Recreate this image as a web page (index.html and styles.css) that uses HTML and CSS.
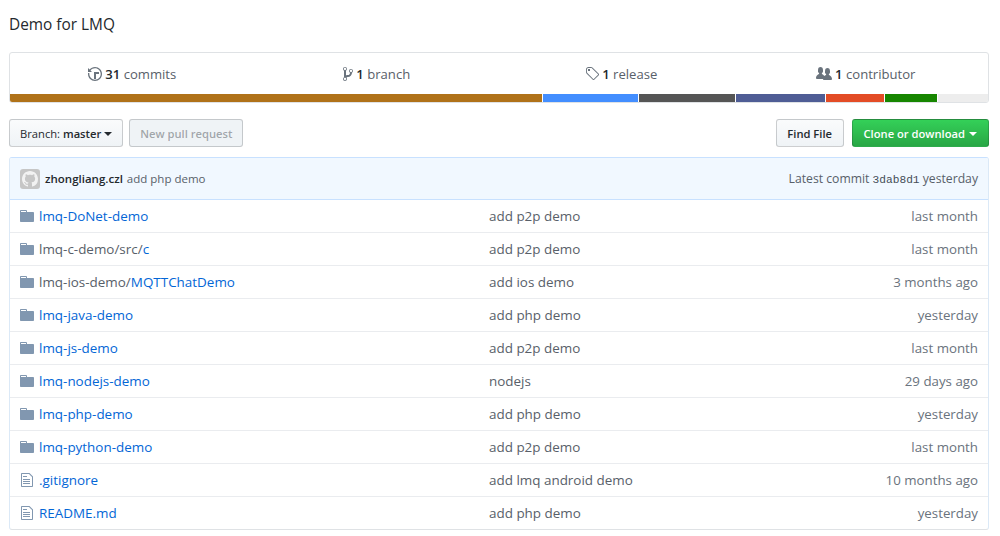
FILE: index.html
```html
<!DOCTYPE html>
<html lang="en">
<head>
<meta charset="utf-8">
<title>Demo for LMQ</title>
<link rel="stylesheet" href="styles.css">
</head>
<body>
<svg class="defs" width="0" height="0" aria-hidden="true">
  <symbol id="i-dir" viewBox="0 0 14 16"><path d="M13 4H7V3c0-.66-.31-1-1-1H1c-.55 0-1 .45-1 1v10c0 .55.45 1 1 1h12c.55 0 1-.45 1-1V5c0-.55-.45-1-1-1zM6 4H1V3h5v1z"/></symbol>
  <symbol id="i-file" viewBox="0 0 12 16"><path d="M6 5H2V4h4v1zM2 8h7V7H2v1zm0 2h7V9H2v1zm0 2h7v-1H2v1zm10-7.5V14c0 .55-.45 1-1 1H1c-.55 0-1-.45-1-1V2c0-.55.45-1 1-1h7.5L12 4.5zM11 5L8 2H1v12h10V5z"/></symbol>
</svg>
<p class="desc">Demo for LMQ</p>

<section class="summary">
  <ul class="stats">
    <li><svg class="stat-icon" width="14" height="16" viewBox="0 0 14 16"><path d="M8 13H6V6h5v2H8v5zM7 1C4.81 1 2.87 2.02 1.59 3.59L0 2v4h4L2.5 4.5C3.55 3.17 5.17 2.3 7 2.3c3.14 0 5.7 2.56 5.7 5.7s-2.56 5.7-5.7 5.7A5.71 5.71 0 0 1 1.3 8c0-.34.03-.67.09-1H.08C.03 7.33 0 7.66 0 8c0 3.86 3.14 7 7 7s7-3.14 7-7-3.14-7-7-7z"/></svg><span><strong>31</strong> commits</span></li>
    <li><svg class="stat-icon" width="10" height="16" viewBox="0 0 10 16"><path d="M10 5c0-1.11-.89-2-2-2a1.993 1.993 0 0 0-1 3.72v.3c-.02.52-.23.98-.63 1.38-.4.4-.86.61-1.38.63-.83.02-1.48.16-2 .45V4.72a1.993 1.993 0 0 0-1-3.72C.88 1 0 1.89 0 3a2 2 0 0 0 1 1.72v6.56c-.59.35-1 .99-1 1.72 0 1.11.89 2 2 2 1.11 0 2-.89 2-2 0-.53-.2-1-.53-1.36.09-.06.48-.41.59-.47.25-.11.56-.17.94-.17 1.05-.05 1.95-.45 2.75-1.25S8.95 7.77 9 6.73h-.02C9.59 6.37 10 5.73 10 5zM2 1.8c.66 0 1.2.55 1.2 1.2 0 .65-.55 1.2-1.2 1.2C1.35 4.2.8 3.65.8 3c0-.65.55-1.2 1.2-1.2zm0 12.41c-.66 0-1.2-.55-1.2-1.2 0-.65.55-1.2 1.2-1.2.65 0 1.2.55 1.2 1.2 0 .65-.55 1.2-1.2 1.2zm6-8c-.66 0-1.2-.55-1.2-1.2 0-.65.55-1.2 1.2-1.2.65 0 1.2.55 1.2 1.2 0 .65-.55 1.2-1.2 1.2z"/></svg><span><strong>1</strong> branch</span></li>
    <li><svg class="stat-icon" width="14" height="16" viewBox="0 0 14 16"><path d="M7.73 1.73C7.26 1.26 6.62 1 5.96 1H3.5C2.13 1 1 2.13 1 3.5v2.47c0 .66.27 1.3.73 1.77l6.06 6.06c.39.39 1.02.39 1.41 0l4.59-4.59a.996.996 0 0 0 0-1.41L7.73 1.73zM2.38 7.09c-.31-.3-.47-.7-.47-1.13V3.5c0-.88.72-1.59 1.59-1.59h2.47c.42 0 .83.16 1.13.47l6.14 6.13-4.73 4.73-6.13-6.15zM3.01 3h2v2H3V3h.01z"/></svg><span><strong>1</strong> release</span></li>
    <li><svg class="stat-icon" width="16" height="16" viewBox="0 0 16 16"><path d="M16 12.999c0 .439-.45 1-1 1H7.995c-.539 0-.994-.447-.995-.999H1c-.55 0-1-.561-1-1 0-2.634 3-4 3-4s.229-.409 0-1c-.841-.621-1.058-.59-1-3 .058-2.419 1.367-3 2.5-3s2.442.58 2.5 3c.058 2.41-.159 2.379-1 3-.229.59 0 1 0 1s1.549.711 2.42 2.088C9.196 9.369 10 8.999 10 8.999s.229-.409 0-1c-.841-.62-1.058-.59-1-3 .058-2.419 1.367-3 2.5-3s2.437.581 2.495 3c.059 2.41-.158 2.38-1 3-.229.59 0 1 0 1s3.005 1.366 3.005 4z"/></svg><span><strong>1</strong> contributor</span></li>
  </ul>
  <div class="langs">
    <span class="lang c-brown"></span>
    <span class="lang c-blue"></span>
    <span class="lang c-dark"></span>
    <span class="lang c-indigo"></span>
    <span class="lang c-red"></span>
    <span class="lang c-green"></span>
    <span class="lang c-rest"></span>
  </div>
</section>

<div class="toolbar">
  <button class="btn btn-branch"><span>Branch: <b>master</b></span><i class="caret"></i></button>
  <button class="btn btn-off">New pull request</button>
  <span class="spacer"></span>
  <button class="btn btn-strong">Find File</button>
  <button class="btn btn-green">Clone or download<i class="caret"></i></button>
</div>

<section class="files">
  <div class="commit">
    <span class="avatar"><svg width="16" height="16" viewBox="0 0 16 16"><path d="M8 0C3.58 0 0 3.58 0 8c0 3.54 2.29 6.53 5.47 7.59.4.07.55-.17.55-.38 0-.19-.01-.82-.01-1.49-2.01.37-2.53-.49-2.69-.94-.09-.23-.48-.94-.82-1.13-.28-.15-.68-.52-.01-.53.63-.01 1.08.58 1.23.82.72 1.21 1.87.87 2.33.66.07-.52.28-.87.51-1.07-1.78-.2-3.64-.89-3.64-3.95 0-.87.31-1.59.82-2.15-.08-.2-.36-1.02.08-2.12 0 0 .67-.21 2.2.82.64-.18 1.32-.27 2-.27.68 0 1.36.09 2 .27 1.53-1.04 2.2-.82 2.2-.82.44 1.1.16 1.92.08 2.12.51.56.82 1.27.82 2.15 0 3.07-1.87 3.75-3.65 3.95.29.25.54.73.54 1.48 0 1.07-.01 1.93-.01 2.2 0 .21.15.46.55.38A8.013 8.013 0 0 0 16 8c0-4.42-3.58-8-8-8z"/></svg></span>
    <strong class="author">zhongliang.czl</strong>
    <span class="commit-msg">add php demo</span>
    <span class="spacer"></span>
    <span class="commit-meta">Latest commit <code>3dab8d1</code> yesterday</span>
  </div>
  <div class="row"><svg class="ficon"><use href="#i-dir"/></svg><span class="name"><a>lmq-DoNet-demo</a></span><span class="msg">add p2p demo</span><span class="age">last month</span></div>
  <div class="row"><svg class="ficon"><use href="#i-dir"/></svg><span class="name">lmq-c-demo/src/<a>c</a></span><span class="msg">add p2p demo</span><span class="age">last month</span></div>
  <div class="row"><svg class="ficon"><use href="#i-dir"/></svg><span class="name">lmq-ios-demo/<a>MQTTChatDemo</a></span><span class="msg">add ios demo</span><span class="age">3 months ago</span></div>
  <div class="row"><svg class="ficon"><use href="#i-dir"/></svg><span class="name"><a>lmq-java-demo</a></span><span class="msg">add php demo</span><span class="age">yesterday</span></div>
  <div class="row"><svg class="ficon"><use href="#i-dir"/></svg><span class="name"><a>lmq-js-demo</a></span><span class="msg">add p2p demo</span><span class="age">last month</span></div>
  <div class="row"><svg class="ficon"><use href="#i-dir"/></svg><span class="name"><a>lmq-nodejs-demo</a></span><span class="msg">nodejs</span><span class="age">29 days ago</span></div>
  <div class="row"><svg class="ficon"><use href="#i-dir"/></svg><span class="name"><a>lmq-php-demo</a></span><span class="msg">add php demo</span><span class="age">yesterday</span></div>
  <div class="row"><svg class="ficon"><use href="#i-dir"/></svg><span class="name"><a>lmq-python-demo</a></span><span class="msg">add p2p demo</span><span class="age">last month</span></div>
  <div class="row"><svg class="ficon"><use href="#i-file"/></svg><span class="name"><a>.gitignore</a></span><span class="msg">add lmq android demo</span><span class="age">10 months ago</span></div>
  <div class="row"><svg class="ficon"><use href="#i-file"/></svg><span class="name"><a>README.md</a></span><span class="msg">add php demo</span><span class="age">yesterday</span></div>
</section>
</body>
</html>
```
FILE: styles.css
```css
* { box-sizing: border-box; }
html, body { margin: 0; padding: 0; }
body {
  width: 1000px;
  height: 536px;
  overflow: hidden;
  padding: 0 11px 0 9px;
  background: #fff;
  color: #24292e;
  font-family: "Open Sans", "Noto Sans", sans-serif;
  font-size: 13.45px;
  line-height: 20px;
}
.defs { position: absolute; }
.desc {
  margin: 0;
  padding-top: 14px;
  height: 52px;
  font-size: 15.4px;
  line-height: 22px;
}
.summary {
  height: 51px;
  border: 1px solid #dfe2e5;
  border-radius: 3px;
  overflow: hidden;
}
.stats {
  display: grid;
  grid-template-columns: repeat(4, 1fr);
  height: 41px;
  margin: 0;
  padding: 0;
  list-style: none;
  color: #586069;
  font-size: 13.1px;
}
.stats li {
  display: flex;
  align-items: center;
  justify-content: center;
}
.stats strong { font-weight: 600; color: #24292e; }
.stat-icon { fill: #6a737d; margin-right: 3px; }
.langs { display: flex; gap: 1px; height: 8px; }
.lang { display: block; }
.c-brown { width: 532px; background: #b07219; }
.c-blue { width: 95px; background: #438eff; }
.c-dark { width: 96px; background: #555555; }
.c-indigo { width: 89px; background: #4f5d95; }
.c-red { width: 58px; background: #e34c26; }
.c-green { width: 52px; background: #178600; }
.c-rest { flex: 1; background: #ededed; }
.toolbar {
  display: flex;
  gap: 6px;
  height: 28px;
  margin-top: 16px;
}
.spacer { flex: 1; }
.btn {
  display: flex;
  align-items: center;
  height: 28px;
  padding: 2px 10px 0;
  border: 1px solid rgba(27,31,35,.2);
  border-radius: 3px;
  background: linear-gradient(#fafbfc, #eff3f6);
  color: #24292e;
  font: 600 11.2px/20px "Open Sans", "Noto Sans", sans-serif;
  white-space: nowrap;
}
.btn b { font-weight: 600; }
.btn-branch { font-weight: 400; }
.btn-branch .caret { margin-left: 3px; }
.btn-off { color: rgba(36,41,46,.4); background: #eff3f6; }
.btn-strong { margin-right: 2px; padding: 2px 10.5px 0; }
.btn-green { color: #fff; background: linear-gradient(#34d058, #28a745); padding: 2px 11px 0; }
.caret {
  width: 0; height: 0;
  margin-left: 4px;
  border: 4px solid transparent;
  border-top-color: currentColor;
  border-bottom-width: 0;
}
.files {
  height: 373px;
  margin-top: 10px;
  border: 1px solid #dfe2e5;
  border-top-color: #c8e1ff;
  border-left-color: #dbe9f7;
  border-right-color: #dbe9f7;
  border-radius: 3px;
  overflow: hidden;
}
.commit {
  display: flex;
  align-items: center;
  height: 42px;
  padding: 1px 10px 0;
  background: #f1f8ff;
  border-bottom: 1px solid #c8e1ff;
  font-size: 11.5px;
  color: #586069;
}
.avatar {
  display: flex;
  align-items: center;
  justify-content: center;
  width: 20px; height: 20px;
  margin: -1px 5px 0 0;
  border-radius: 3px;
  background: #c6c6c6;
  fill: #f2f2f2;
}
.author { font-weight: 600; color: #24292e; margin-right: 4px; }
.commit-meta { font-size: 12.2px; padding-top: 1px; }
.commit-meta code { font: 11.2px/20px "Liberation Mono", monospace; color: #444d56; }
.row {
  display: flex;
  align-items: center;
  height: 33px;
  padding: 0 10px;
  border-bottom: 1px solid #eaecef;
  color: #586069;
}
.row:last-child { border-bottom-color: transparent; }
.ficon { width: 14px; height: 16px; flex: none; margin-right: 5px; fill: rgba(3,47,98,.5); }
.name { width: 450px; flex: none; }
.name a { color: #0366d6; }
.msg { flex: 1; }
.age { color: #6a737d; font-size: 13.3px; }
```
